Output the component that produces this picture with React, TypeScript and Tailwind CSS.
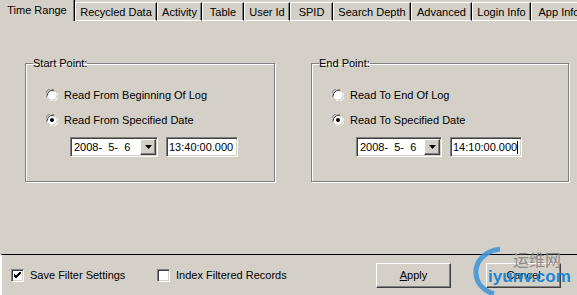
import React from 'react';

const tabs = [
  { label: 'Time Range', width: 'w-[75px]', active: true },
  { label: 'Recycled Data', width: 'w-[82px]' },
  { label: 'Activity', width: 'w-[45px]' },
  { label: 'Table', width: 'w-[42px]' },
  { label: 'User Id', width: 'w-[46px]' },
  { label: 'SPID', width: 'w-[43px]' },
  { label: 'Search Depth', width: 'w-[78px]' },
  { label: 'Advanced', width: 'w-[61px]' },
  { label: 'Login Info', width: 'w-[59px]' },
  { label: 'App Info', width: 'w-[56px]' },
];

const sunken =
  'border border-t-[#808080] border-l-[#808080] border-b-white border-r-white shadow-[inset_1px_1px_0_#404040,inset_-1px_-1px_0_#d4d0c8]';
const raised =
  'border border-t-white border-l-white border-b-[#404040] border-r-[#404040] shadow-[inset_-1px_-1px_0_#808080]';

const Radio = ({ checked }: { checked?: boolean }) => (
  <svg width="12" height="12" viewBox="0 0 12 12" className="shrink-0">
    <path d="M0.5 8 A5.5 5.5 0 0 1 8 0.5" stroke="#808080" fill="none" />
    <path d="M11.5 4 A5.5 5.5 0 0 1 4 11.5" stroke="#ffffff" fill="none" />
    <circle cx="6" cy="6" r="4.5" fill="#fff" stroke="#404040" strokeDasharray="10 20" strokeDashoffset="-13" />
    {checked && <circle cx="6" cy="6" r="2" fill="#000" />}
  </svg>
);

const Check = ({ checked }: { checked?: boolean }) => (
  <div className={`w-[13px] h-[13px] bg-white shrink-0 flex items-center justify-center ${sunken}`}>
    {checked && (
      <svg width="7" height="7" viewBox="0 0 7 7">
        <path d="M0 2 L2 4 L7 -1 M0 3 L2 5 L7 0 M0 4 L2 6 L7 1" stroke="#000" strokeWidth="1" fill="none" />
      </svg>
    )}
  </div>
);

const DateTime = ({ date, time, caret, dateW }: { date: string; time: string; caret?: boolean; dateW: string }) => (
  <div className="flex items-center gap-[8px]">
    <div className={`${dateW} h-[20px] bg-white flex items-center pl-[2px] ${sunken}`}>
      <span className="whitespace-pre flex-1 pl-[1px]">{date}</span>
      <div className={`w-[16px] h-[16px] mr-[1px] bg-[#d4d0c8] flex items-center justify-center ${raised}`}>
        <svg width="7" height="4" viewBox="0 0 7 4">
          <path d="M0 0 H7 L3.5 4 Z" fill="#000" />
        </svg>
      </div>
    </div>
    <div className={`w-[72px] h-[20px] bg-white flex items-center pl-[2px] ${sunken}`}>
      <span>{time}</span>
      {caret && <span className="w-px h-[13px] bg-black" />}
    </div>
  </div>
);

const Group = ({
  title,
  width,
  dateW,
  first,
  second,
  time,
  caret,
}: {
  title: string;
  width: string;
  dateW: string;
  first: string;
  second: string;
  time: string;
  caret?: boolean;
}) => (
  <fieldset
    className={`${width} h-[125px] border border-[#808080] shadow-[inset_1px_1px_0_#fff,1px_1px_0_#fff]`}
  >
    <legend className="ml-[7px] px-0 leading-[13px]">{title}</legend>
    <div className="flex flex-col pt-[17px] pl-[20px]">
      <div className="flex items-center gap-[6px] h-[16px]">
        <Radio />
        <span>{first}</span>
      </div>
      <div className="flex items-center gap-[6px] h-[16px] mt-[9px]">
        <Radio checked />
        <span>{second}</span>
      </div>
      <div className="mt-[9px] pl-[24px]">
        <DateTime date="2008-  5-  6" time={time} caret={caret} dateW={dateW} />
      </div>
    </div>
  </fieldset>
);

export default function App() {
  return (
    <div className="relative w-[577px] h-[295px] overflow-hidden bg-[#d4d0c8] text-black text-[11px] leading-[13px] font-['Liberation_Sans',Arial,sans-serif] flex flex-col">
      <div className="h-[21px] flex items-end overflow-hidden shrink-0">
        {tabs.map((t) =>
          t.active ? (
            <div
              key={t.label}
              className={`${t.width} shrink-0 h-[21px] flex items-center justify-center pb-[1px] border-r border-r-black shadow-[inset_-1px_0_0_#808080]`}
            >
              {t.label}
            </div>
          ) : (
            <div
              key={t.label}
              className={`${t.width} shrink-0 h-[19px] flex items-center justify-center pt-[1px] border-t border-l border-b border-white border-r border-r-black shadow-[inset_-1px_0_0_#808080] whitespace-nowrap`}
            >
              {t.label}
            </div>
          )
        )}
      </div>

      <div className="h-[233px] shrink-0 flex items-start pt-[36px] pl-[25px]">
        <Group
          title="Start Point:"
          width="w-[250px]"
          dateW="w-[88px]"
          first="Read From Beginning Of Log"
          second="Read From Specified Date"
          time="13:40:00.000"
        />
        <div className="ml-[36px]">
          <Group
            title="End Point:"
            width="w-[258px]"
            dateW="w-[86px]"
            first="Read To End Of Log"
            second="Read To Specified Date"
            time="14:10:00.000"
            caret
          />
        </div>
      </div>

      <div className="flex-1 border-t border-t-black border-l-2 border-l-white flex items-center pl-[9px] pr-[16px]">
        <div className="w-[146px] flex items-center gap-[6px]">
          <Check checked />
          <span>Save Filter Settings</span>
        </div>
        <div className="flex items-center gap-[6px]">
          <Check />
          <span>Index Filtered Records</span>
        </div>
        <div className="ml-auto flex gap-[35px]">
          <button className={`w-[75px] h-[25px] bg-[#d4d0c8] ${raised}`}>
            <span className="underline">A</span>pply
          </button>
          <button className={`w-[75px] h-[25px] bg-[#d4d0c8] ${raised}`}>Cancel</button>
        </div>
      </div>

      {/* watermark */}
      <div className="absolute left-[472px] top-[246px] w-[105px] h-[49px] pointer-events-none">
        <svg width="32" height="49" viewBox="0 0 32 49" className="absolute left-0 top-0">
          <path d="M28 3 C12 5 3 16 4 28 C5 38 12 45 22 48" stroke="#3b94d8" strokeWidth="5" fill="none" opacity="0.85" />
        </svg>
        <span className="absolute left-[41px] top-[4px] text-[16px] leading-[18px] text-[#8a8a8a] font-['Noto_Sans_CJK_SC',sans-serif]">
          运维网
        </span>
        <span className="absolute left-[16px] top-[21px] text-[17px] leading-[20px] font-bold text-[#1f86d2] font-['Liberation_Sans',Arial,sans-serif]">
          iyunv.com
        </span>
      </div>
    </div>
  );
}
